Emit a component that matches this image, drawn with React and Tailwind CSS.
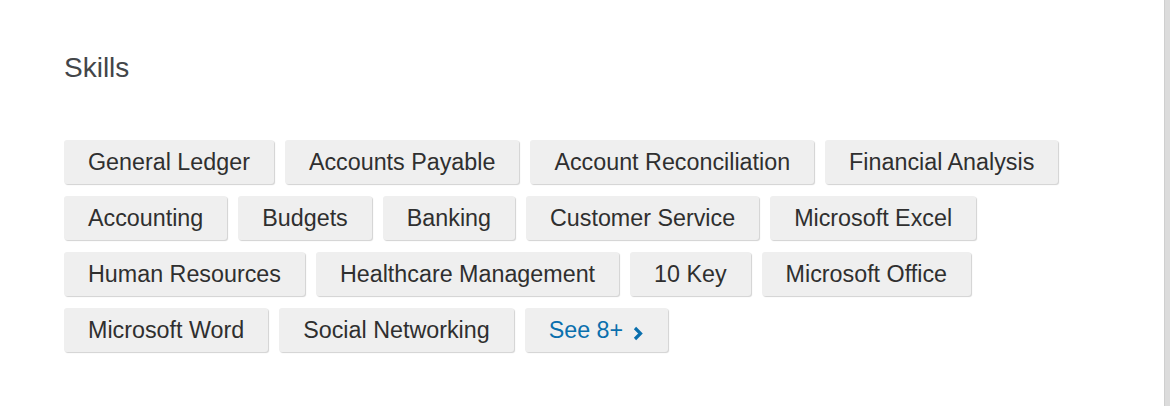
import React from 'react';

const skills = [
  'General Ledger',
  'Accounts Payable',
  'Account Reconciliation',
  'Financial Analysis',
  'Accounting',
  'Budgets',
  'Banking',
  'Customer Service',
  'Microsoft Excel',
  'Human Resources',
  'Healthcare Management',
  '10 Key',
  'Microsoft Office',
  'Microsoft Word',
  'Social Networking',
];

const tagClass =
  'h-[44px] flex items-center px-[24px] bg-[#efefef] rounded-[3px] shadow-[1px_1px_1px_rgba(0,0,0,0.18)] text-[23.3px]';

const App = () => {
  return (
    <div className="w-[1170px] h-[406px] flex bg-white font-['Liberation_Sans',Arial,sans-serif]">
      {/* Skills card */}
      <div className="flex-1 pl-[64px] pt-[52px] pr-[100px]">
        <h2 className="text-[28px] leading-[32px] text-[#434649]">Skills</h2>

        <div className="mt-[56px] flex flex-wrap gap-x-[11px] gap-y-[12px]">
          {skills.map(s => (
            <span key={s} className={`${tagClass} text-[#2f2f2f]`}>
              {s}
            </span>
          ))}
          <button className={`${tagClass} text-[#0a6fad] gap-[9px]`}>
            <span>See 8+</span>
            <svg width="12" height="16" viewBox="0 0 12 16" className="mt-[5px]">
              <path d="M3 3 L8.5 8.5 L3 14" fill="none" stroke="#0a6fad" strokeWidth="3.2" />
            </svg>
          </button>
        </div>
      </div>

      {/* Right edge */}
      <div className="w-[6px] bg-[#dcdcdc] border-l border-[#cfcfcf]" />
    </div>
  );
};

export default App;
